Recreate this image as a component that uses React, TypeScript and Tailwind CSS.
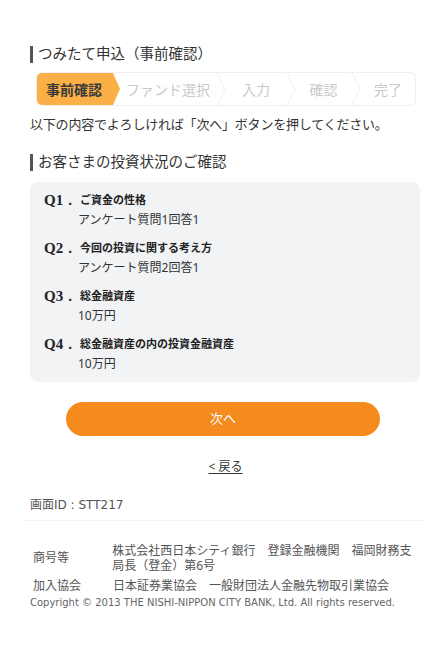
import React from "react";

const steps = [
  { label: "ファンド選択", w: "w-[96px]" },
  { label: "入力", w: "w-[60px]" },
  { label: "確認", w: "w-[55px]" },
];

function Chevron() {
  return (
    <svg width="10" height="32" viewBox="0 0 10 32" className="shrink-0">
      <polyline points="1,0 9,16 1,32" fill="none" stroke="#f0f0f0" strokeWidth="1" />
    </svg>
  );
}

function StepBar() {
  return (
    <div className="mt-[8px] ml-[6px] w-[380px] h-[34px] flex items-stretch border border-[#efefef] rounded-[6px] overflow-hidden text-[14px]">
      <div className="w-[83px] shrink-0 bg-[#fab046] flex items-center pl-[9px] font-bold text-[#3a3a3a] [clip-path:polygon(0_0,calc(100%-7px)_0,100%_50%,calc(100%-7px)_100%,0_100%)]">
        事前確認
      </div>
      {steps.map((s) => (
        <React.Fragment key={s.label}>
          <div className={`${s.w} shrink-0 flex items-center justify-center text-[#cacaca]`}>{s.label}</div>
          <Chevron />
        </React.Fragment>
      ))}
      <div className="flex-1 flex items-center justify-center text-[#cacaca]">完了</div>
    </div>
  );
}

function Heading({ children, className = "" }: { children: React.ReactNode; className?: string }) {
  return (
    <h2 className={`flex items-center h-[20px] text-[14.5px] text-[#333] ${className}`}>
      <span className="w-[3px] h-[17px] bg-[#555] mr-[5px]" />
      {children}
    </h2>
  );
}

const qa = [
  { q: "Q1", label: "ご資金の性格", a: "アンケート質問1回答1" },
  { q: "Q2", label: "今回の投資に関する考え方", a: "アンケート質問2回答1" },
  { q: "Q3", label: "総金融資産", a: "10万円" },
  { q: "Q4", label: "総金融資産の内の投資金融資産", a: "10万円" },
];

export default function App() {
  return (
    <div className="w-[446px] min-h-[664px] bg-white font-['Noto_Sans','Noto_Sans_CJK_JP',sans-serif] text-[#333]">
      <div className="px-[30px] pt-[44px]">
        <Heading>つみたて申込（事前確認）</Heading>
        <StepBar />
        <p className="mt-[9px] h-[20px] flex items-center text-[13px] text-[#333] tracking-[-0.2px]">
          以下の内容でよろしければ「次へ」ボタンを押してください。
        </p>
        <Heading className="mt-[17px]">お客さまの投資状況のご確認</Heading>

        <div className="mt-[10px] w-[390px] rounded-[8px] bg-[#f2f3f5] pt-[8px] pb-[8px] pl-[14px] flex flex-col gap-[8px]">
          {qa.map((item) => (
            <div key={item.q}>
              <div className="h-[20px] flex items-center">
                <span className="w-[36px] shrink-0 flex font-['Liberation_Serif',serif] font-bold text-[15px] text-[#222]">
                  {item.q}
                  <span className="ml-[5px]">.</span>
                </span>
                <span className="text-[11px] font-bold text-[#222]">{item.label}</span>
              </div>
              <div className="h-[20px] flex items-center pl-[34px] text-[12px] text-[#333]">{item.a}</div>
            </div>
          ))}
        </div>

        <button className="mt-[20px] mx-auto block w-[314px] h-[34px] rounded-full bg-[#f58a1f] text-white text-[13px]">
          次へ
        </button>

        <div className="mt-[21px] h-[20px] flex items-center justify-center pl-[5px]">
          <a className="text-[12px] text-[#333] underline underline-offset-[2px]">&lt;&nbsp;戻る</a>
        </div>

        <p className="mt-[18px] h-[20px] flex items-center text-[12px] text-[#555] font-['DejaVu_Sans','Noto_Sans_CJK_JP',sans-serif]">
          画面ID : STT217
        </p>
      </div>

      <div className="mt-[5px] mx-[22px] h-[1px] bg-[#f3f3f3]" />

      <div className="px-[30px] pt-[22px] text-[12px] text-[#555]">
        <div className="flex items-center">
          <span className="w-[83px] pl-[3px]">商号等</span>
          <span className="w-[307px] leading-[15px]">株式会社西日本シティ銀行　登録金融機関　福岡財務支局長（登金）第6号</span>
        </div>
        <div className="mt-[5px] flex items-center leading-[15px]">
          <span className="w-[83px] pl-[3px]">加入協会</span>
          <span>日本証券業協会　一般財団法人金融先物取引業協会</span>
        </div>
        <p className="mt-[3px] text-[10px] leading-[14px] text-[#666] font-['DejaVu_Sans',sans-serif]">
          Copyright © 2013 THE NISHI-NIPPON CITY BANK, Ltd. All rights reserved.
        </p>
      </div>
    </div>
  );
}
